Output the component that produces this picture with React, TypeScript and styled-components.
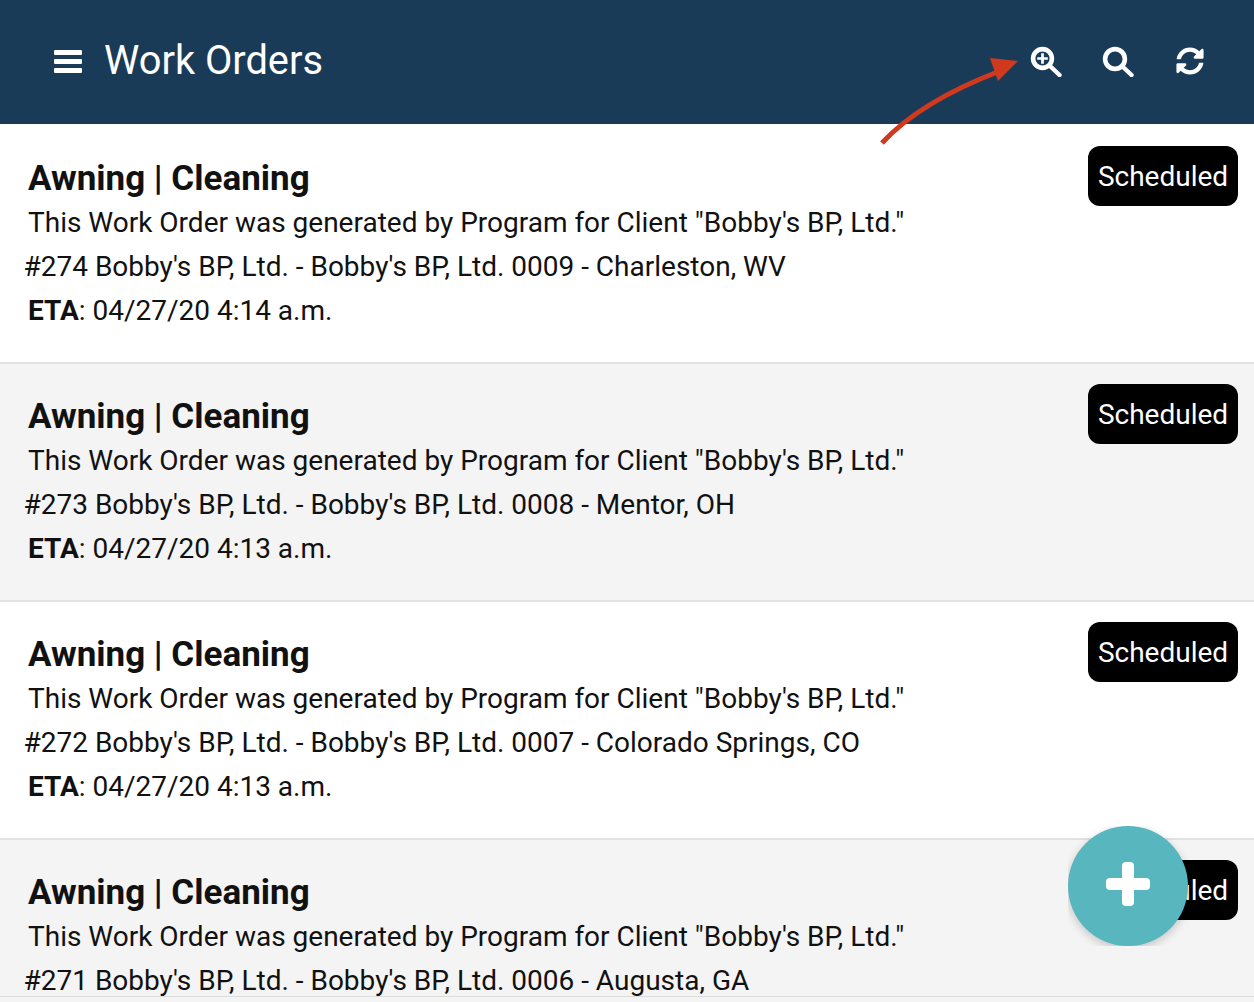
import React from "react";
import styled, { createGlobalStyle } from "styled-components";
import { FaSyncAlt } from "react-icons/fa";

const Global = createGlobalStyle`
  html, body { margin: 0; padding: 0; height: 100%; overflow: hidden; background: #fff; }
  * { box-sizing: border-box; }
  body { font-family: Roboto, "Liberation Sans", sans-serif; color: #111; }
`;

const Page = styled.div`
  position: relative;
  width: 1254px;
  height: 1002px;
  display: flex;
  flex-direction: column;
  overflow: hidden;
`;

const Header = styled.header`
  flex: 0 0 124px;
  background: #1a3b57;
  color: #fff;
  display: flex;
  align-items: center;
  padding: 0 48px 2px 54px;
`;

const Title = styled.h1`
  margin: 0 0 2px 22px;
  font-size: 39.8px;
  font-weight: 400;
  flex: 1;
`;

const HeaderIcons = styled.div`
  display: flex;
  gap: 40px;
  align-items: center;
  line-height: 0;
`;

const SyncSlot = styled.span`
  width: 32px;
  height: 32px;
  display: flex;
  align-items: center;
  justify-content: center;
`;

const List = styled.div`
  flex: 1;
  overflow: hidden;
`;

const Row = styled.article<{ $alt: boolean }>`
  height: 238px;
  padding: 30px 16px 0 28px;
  display: flex;
  justify-content: space-between;
  align-items: flex-start;
  background: ${(p) => (p.$alt ? "#f4f4f4" : "#fff")};
  border-top: 2px solid #e2e2e2;
  &:first-child {
    border-top-color: #fff;
  }
`;

const Body = styled.div`
  font-size: 28px;
  line-height: 44px;
`;

const RowTitle = styled.h2`
  margin: 0;
  font-size: 35px;
  line-height: 45px;
  font-weight: 700;
`;

const Line = styled.div``;

const Location = styled.div`
  margin-left: -4.5px;
`;

const Badge = styled.div`
  margin-top: -10px;
  width: 150px;
  height: 60px;
  border-radius: 12px;
  background: #000;
  color: #fff;
  font-size: 28px;
  display: flex;
  align-items: center;
  justify-content: center;
`;

const Footer = styled.div`
  flex: 0 0 6px;
  background: #f4f4f4;
  border-top: 1px solid #dcdcdc;
`;

const FabClip = styled.div`
  position: absolute;
  left: 1068px;
  top: 826px;
  width: 120px;
  height: 120px;
  overflow: hidden;
`;

const Fab = styled.button`
  width: 120px;
  height: 120px;
  padding: 0 0 4px;
  border: 0;
  border-radius: 50%;
  background: #58b6be;
  display: flex;
  align-items: center;
  justify-content: center;
  box-shadow: 0 3px 10px rgba(0, 0, 0, 0.2);
`;

const ArrowSvg = styled.svg`
  position: absolute;
  left: 870px;
  top: 50px;
`;

const orders = [
  ["#274", "0009 - Charleston, WV", "04/27/20 4:14 a.m."],
  ["#273", "0008 - Mentor, OH", "04/27/20 4:13 a.m."],
  ["#272", "0007 - Colorado Springs, CO", "04/27/20 4:13 a.m."],
  ["#271", "0006 - Augusta, GA", "04/27/20 4:13 a.m."],
];

const MenuIcon = () => (
  <svg width="28" height="23" viewBox="0 0 28 23" fill="#fff">
    <rect y="0" width="28" height="5" rx="1" />
    <rect y="9" width="28" height="5" rx="1" />
    <rect y="18" width="28" height="5" rx="1" />
  </svg>
);

const ZoomInIcon = () => (
  <svg width="32" height="32" viewBox="0 0 32 32" fill="none" stroke="#fff" strokeLinecap="round">
    <circle cx="12.5" cy="13.5" r="9.4" strokeWidth="4.6" />
    <path d="M20 21 L29.5 30" strokeWidth="4.4" />
    <path d="M7.2 13.5 H17.8 M12.5 8.2 V18.8" strokeWidth="2.7" strokeLinecap="butt" />
  </svg>
);

const SearchIcon = () => (
  <svg width="32" height="32" viewBox="0 0 32 32" fill="none" stroke="#fff" strokeLinecap="round">
    <circle cx="13" cy="14" r="9.9" strokeWidth="4.6" />
    <path d="M21 22 L29.5 30" strokeWidth="4.4" />
  </svg>
);

const PlusIcon = () => (
  <svg width="44" height="44" viewBox="0 0 44 44" fill="#fff">
    <rect x="16" y="0" width="12" height="44" rx="4" />
    <rect x="0" y="16" width="44" height="12" rx="4" />
  </svg>
);

export default function App() {
  return (
    <Page>
      <Global />
      <Header>
        <MenuIcon />
        <Title>Work Orders</Title>
        <HeaderIcons>
          <ZoomInIcon />
          <SearchIcon />
          <SyncSlot>
            <FaSyncAlt size={28} />
          </SyncSlot>
        </HeaderIcons>
      </Header>
      <List>
        {orders.map(([num, rest, eta], i) => (
          <Row key={num} $alt={i % 2 === 1}>
            <Body>
              <RowTitle>Awning | Cleaning</RowTitle>
              <Line>This Work Order was generated by Program for Client "Bobby's BP, Ltd."</Line>
              <Location>{num} Bobby's BP, Ltd. - Bobby's BP, Ltd. {rest}</Location>
              <Line><b>ETA</b>: {eta}</Line>
            </Body>
            <Badge>Scheduled</Badge>
          </Row>
        ))}
      </List>
      <Footer />
      <FabClip>
        <Fab aria-label="Add"><PlusIcon /></Fab>
      </FabClip>
      <ArrowSvg width="160" height="100" viewBox="0 0 160 100">
        <path d="M12 93 C 35 68, 70 44, 130 21" fill="none" stroke="#d0391e" strokeWidth="5" />
        <polygon points="148,11 120,8 128,31" fill="#d0391e" />
      </ArrowSvg>
    </Page>
  );
}
